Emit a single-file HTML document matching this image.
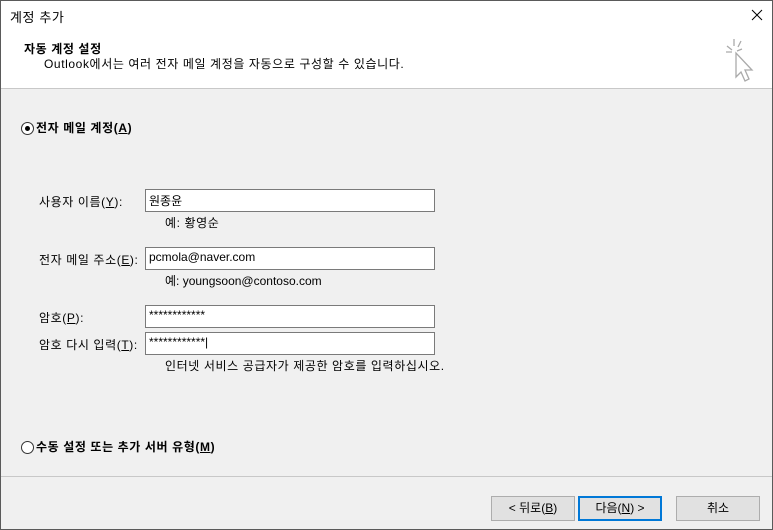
<!DOCTYPE html>
<html><head><meta charset="utf-8"><style>
body{margin:0;width:773px;height:530px;overflow:hidden;font-family:"Liberation Sans","Noto Sans CJK KR",sans-serif;font-size:12px;color:#000;}
.win{position:absolute;left:0;top:0;width:771px;height:528px;border:1px solid #5a5a5a;background:#f0f0f0;}
.title{position:absolute;left:0;top:0;width:771px;height:30px;background:#fff;}
.hdr{position:absolute;left:0;top:30px;width:771px;height:57px;background:#fff;border-bottom:1px solid #c8c8c8;}
.a{position:absolute;white-space:nowrap;letter-spacing:0.6px;}
.l{letter-spacing:0;}
.inp{position:absolute;left:144px;width:288px;height:21px;background:#fff;border:1px solid #7a7a7a;}
.inp span{position:absolute;left:3px;top:2px;}
.btn{position:absolute;top:495px;height:23px;width:82px;background:#e1e1e1;border:1px solid #adadad;text-align:center;line-height:22px;}
.radio{position:absolute;width:11px;height:11px;border:1px solid #333;border-radius:50%;background:#fff;}
</style></head><body><div class="win">
<div class="title"><span class="a" style="left:9px;top:6px;font-size:13px">계정 추가</span>
<svg class="a" style="left:750px;top:8px" width="12" height="12"><path d="M1 1L11 11M11 1L1 11" stroke="#000" stroke-width="1"/></svg></div>
<div class="hdr">
<span class="a" style="left:23px;top:9px;font-weight:bold">자동 계정 설정</span>
<span class="a" style="left:43px;top:24px">Outlook에서는 여러 전자 메일 계정을 자동으로 구성할 수 있습니다.</span>
<svg class="a" style="left:723px;top:6px" width="40" height="48"><g stroke="#aaa" stroke-width="1.3" fill="none"><path d="M10 2v7M3 9l5 4M2 15h6M17 4l-3 6M18 12l-5 2"/><path d="M12 16v24l5-5 4 9 4-2-4-9 7 0z" fill="#fff"/></g></svg>
</div>
<div class="radio" style="left:20px;top:121px"><div style="position:absolute;left:3px;top:3px;width:5px;height:5px;border-radius:50%;background:#000"></div></div>
<span class="a" style="left:35px;top:118px;font-weight:bold">전자 메일 계정(<u>A</u>)</span>
<span class="a" style="left:38px;top:192px">사용자 이름(<u>Y</u>):</span>
<div class="inp" style="top:188px"><span>원종윤</span></div>
<span class="a" style="left:164px;top:213px">예: 황영순</span>
<span class="a" style="left:38px;top:250px">전자 메일 주소(<u>E</u>):</span>
<div class="inp" style="top:246px"><span>pcmola@naver.com</span></div>
<span class="a l" style="left:164px;top:271px">예: youngsoon@contoso.com</span>
<span class="a" style="left:38px;top:308px">암호(<u>P</u>):</span>
<div class="inp" style="top:304px"><span>************</span></div>
<span class="a" style="left:38px;top:335px">암호 다시 입력(<u>T</u>):</span>
<div class="inp" style="top:331px"><span>************|</span></div>
<span class="a" style="left:164px;top:356px">인터넷 서비스 공급자가 제공한 암호를 입력하십시오.</span>
<div class="radio" style="left:20px;top:440px"></div>
<span class="a" style="left:35px;top:437px;font-weight:bold">수동 설정 또는 추가 서버 유형(<u>M</u>)</span>
<div style="position:absolute;left:0;top:475px;width:771px;height:1px;background:#c8c8c8"></div>
<div class="btn" style="left:490px">&lt; 뒤로(<u>B</u>)</div>
<div class="btn" style="left:577px;border:2px solid #0078d7;height:21px;line-height:20px;width:80px">다음(<u>N</u>) &gt;</div>
<div class="btn" style="left:675px">취소</div>
</div></body></html>
